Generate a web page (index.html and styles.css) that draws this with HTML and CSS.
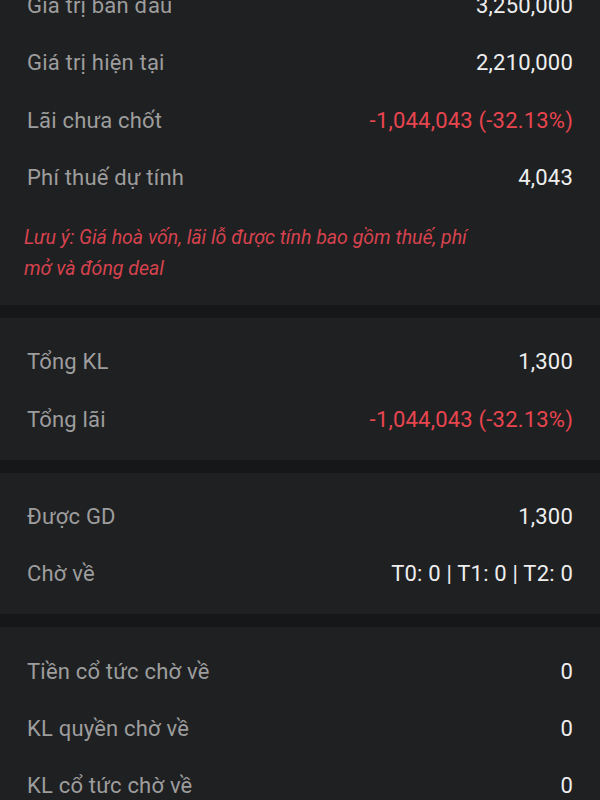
FILE: index.html
```html
<!DOCTYPE html>
<html lang="vi">

<head>
    <meta charset="UTF-8">
    <meta name="viewport" content="width=device-width, initial-scale=1.0">
    <title>Chi tiết danh mục</title>
    <link rel="stylesheet" href="styles.css">
</head>

<body>
    <div class="page">
        <section class="block first">
            <div class="row"><span class="label">Giá trị ban đầu</span><span class="value">3,250,000</span></div>
            <div class="row"><span class="label">Giá trị hiện tại</span><span class="value">2,210,000</span></div>
            <div class="row"><span class="label">Lãi chưa chốt</span><span class="value down">-1,044,043 (-32.13%)</span></div>
            <div class="row"><span class="label">Phí thuế dự tính</span><span class="value">4,043</span></div>
            <p class="note">Lưu ý: Giá hoà vốn, lãi lỗ được tính bao gồm thuế, phí mở và đóng deal</p>
        </section>

        <section class="block">
            <div class="row"><span class="label">Tổng KL</span><span class="value">1,300</span></div>
            <div class="row"><span class="label">Tổng lãi</span><span class="value down">-1,044,043 (-32.13%)</span></div>
        </section>

        <section class="block">
            <div class="row"><span class="label">Được GD</span><span class="value">1,300</span></div>
            <div class="row"><span class="label">Chờ về</span><span class="value">T0: 0 | T1: 0 | T2: 0</span></div>
        </section>

        <section class="block">
            <div class="row"><span class="label">Tiền cổ tức chờ về</span><span class="value">0</span></div>
            <div class="row"><span class="label">KL quyền chờ về</span><span class="value">0</span></div>
            <div class="row"><span class="label">KL cổ tức chờ về</span><span class="value">0</span></div>
        </section>
    </div>
</body>

</html>
```

FILE: styles.css
```css
body {
    margin: 0;
    background-color: #161719;
    font-family: Roboto, "Noto Sans", sans-serif;
    color: #ececec;
    overflow: hidden;
}

.page {
    display: flex;
    flex-direction: column;
    gap: 13px;
}

.block {
    background-color: #1f2022;
    padding: 15px 27px 12px;
}

.block.first {
    margin-top: -38px;
    padding-bottom: 21px;
}

.row {
    display: flex;
    justify-content: space-between;
    align-items: center;
    height: 57.3px;
    font-size: 22px;
    letter-spacing: 0.2px;
}

.label {
    color: #9d9d9d;
}

.value {
    color: #eeeeee;
}

.value.down {
    color: #e8454f;
}

.note {
    margin: 16px 0 0 -3px;
    padding-right: 85px;
    font-size: 19.5px;
    font-style: italic;
    line-height: 31px;
    color: #d6434e;
}
```
